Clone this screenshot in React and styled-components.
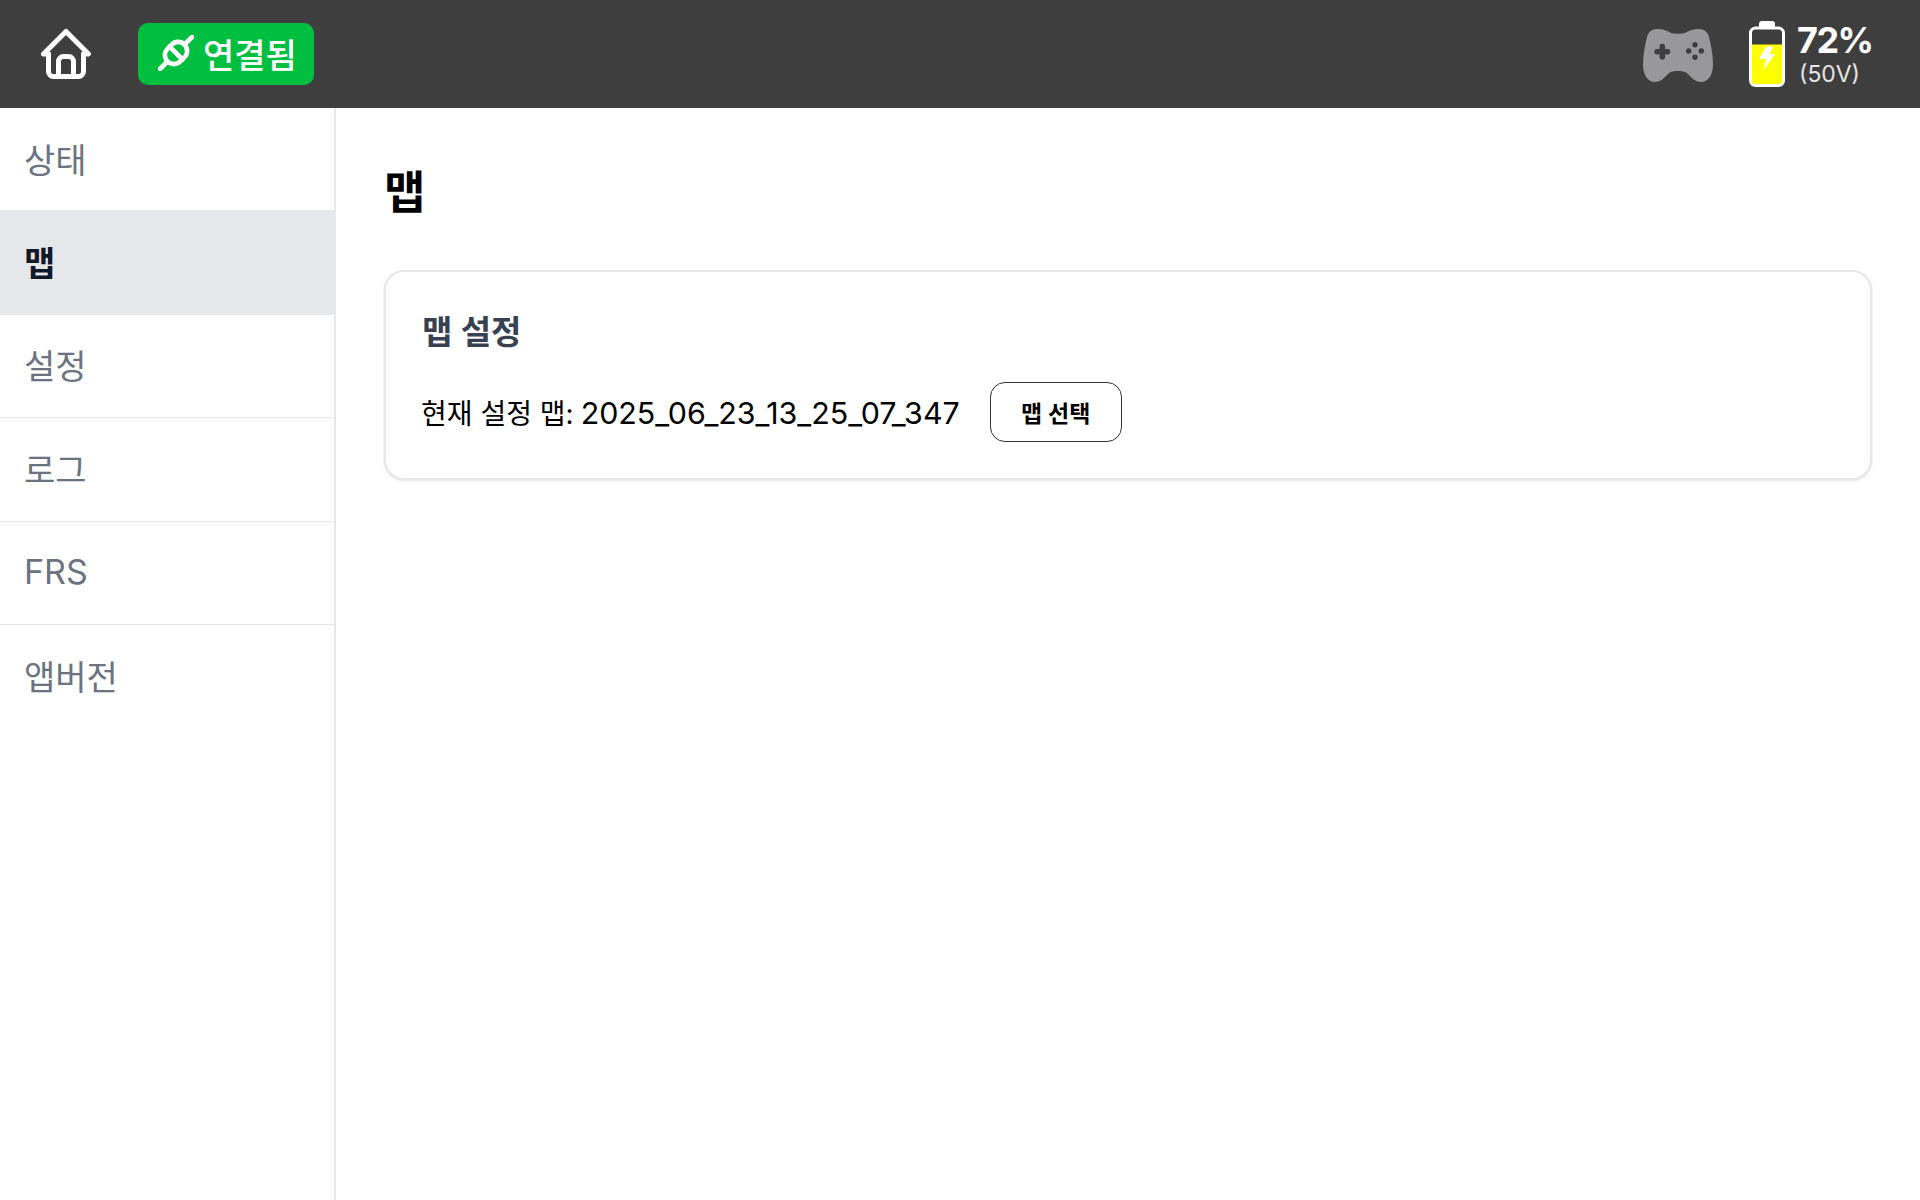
import React from "react";
import styled, { createGlobalStyle } from "styled-components";
import { TbHome } from "react-icons/tb";

const Global = createGlobalStyle`
  * { box-sizing: border-box; }
  html, body { margin: 0; padding: 0; background: #fff; }
  body { font-family: Inter, "Noto Sans CJK KR", sans-serif; }
`;
const Page = styled.div`display:flex;flex-direction:column;height:1200px;`;
const Header = styled.header`
  height:108px;background:#3e3e3e;display:flex;align-items:center;justify-content:space-between;
  padding:0 47px 0 36px;color:#fff;flex:none;
`;
const Group = styled.div`display:flex;align-items:center;`;
const HomeButton = styled.div`display:flex;color:#fff;font-size:60px;margin-right:42px;`;
const Status = styled.div`
  display:flex;align-items:center;gap:9px;height:62px;width:176px;padding:0 0 2px 20px;background:#00bf40;border-radius:10px;
  font-size:34px;font-weight:500;color:#fff;white-space:nowrap;
`;
const Plug = styled.svg`display:block;width:36px;height:36px;flex:none;`;
const Pad = styled.svg`display:block;width:70px;height:53px;margin:2px 36px 0 0;`;
const Battery = styled.svg`width:36px;height:66px;margin-right:12px;display:block;`;
const BatteryText = styled.div`display:flex;flex-direction:column;padding-top:2px;width:76px;`;
const Percent = styled.div`font-size:36px;font-weight:700;line-height:36px;letter-spacing:-1.5px;`;
const Volt = styled.div`font-size:23px;line-height:28px;margin-top:2px;color:#e5e5e5;padding-left:2px;`;
const Body = styled.div`display:flex;flex:1;min-height:0;`;
const Side = styled.nav`width:336px;flex:none;border-right:2px solid #e5e7eb;`;
const Item = styled.div`
  height:103.4px;display:flex;align-items:center;padding:0 24px 2px;font-size:34px;
  border-bottom:${p=>p.$last?"none":"1px solid #e5e7eb"};
  color:${p=>p.$active?"#111827":"#6b7280"};
  font-weight:${p=>p.$active?700:400};
  background:${p=>p.$active?"#e5e7eb":"transparent"};
`;
const Main = styled.main`flex:1;padding:58px 48px 48px;`;
const Title = styled.h1`margin:0 0 50px;font-size:45px;font-weight:700;line-height:54px;color:#000;`;
const Card = styled.section`
  border:2px solid #e5e7eb;border-radius:20px;padding:40px 36px 0;height:210px;
  box-shadow:0 1px 3px rgba(0,0,0,.1);background:#fff;
`;
const CardTitle = styled.h2`margin:0 0 30px;font-size:33px;font-weight:600;line-height:40px;color:#374151;`;
const Row = styled.div`display:flex;align-items:center;gap:30px;color:#000;`;
const Current = styled.div`display:flex;align-items:baseline;gap:7px;margin-left:-1px;`;
const Label = styled.span`font-size:28px;`;
const Value = styled.span`font-size:30.4px;`;
const Button = styled.button`
  width:132px;height:60px;border:1.5px solid #333;border-radius:15px;background:#fff;
  font-family:inherit;font-size:23px;font-weight:600;color:#000;padding:0;
`;
export default function App(){
  const items=["상태","맵","설정","로그","FRS","앱버전"];
  return <><Global/><Page>
    <Header>
      <Group>
        <HomeButton><TbHome/></HomeButton>
        <Status>
          <Plug viewBox="0 0 36 36" fill="none" stroke="#fff" strokeWidth="4.6" strokeLinecap="round">
            <path d="M2 34L8 28M28 8L34 2"/>
            <rect x="6" y="9" width="24" height="18" rx="9" transform="rotate(-45 18 18)"/>
            <path d="M11.5 11.5L24.5 24.5"/>
          </Plug>
          연결됨
        </Status>
      </Group>
      <Group>
        <Pad viewBox="0 0 70 53">
          <path fill="#98989a" d="M14 0C20 0 25 2 28 4C31 5 39 5 42 4C45 2 50 0 56 0C62 0 65 4 66 8C68 16 70 26 70 36C70 46 65 53 58 53C52 53 48 48 45 45C42 42 38 42 35 42C32 42 28 42 25 45C22 48 18 53 12 53C5 53 0 46 0 36C0 26 2 16 4 8C5 4 8 0 14 0Z"/>
          <path stroke="#3e3e3e" strokeWidth="5.5" strokeLinecap="round" fill="none" d="M14 22.7H24.6M19.3 17.4V28"/>
          <g fill="#3e3e3e">
            <circle cx="52" cy="15.7" r="2.7"/><circle cx="52" cy="28.3" r="2.7"/>
            <circle cx="45.7" cy="22" r="2.7"/><circle cx="58.3" cy="22" r="2.7"/>
          </g>
        </Pad>
        <Battery viewBox="0 0 36 66">
          <path d="M10 3a3 3 0 0 1 3-3h10a3 3 0 0 1 3 3v4H10z" fill="#fff"/>
          <rect x="2" y="23.5" width="32" height="41" fill="#ff0"/>
          <rect x="1.5" y="7" width="33" height="57.5" rx="5" fill="none" stroke="#fff" strokeWidth="3"/>
          <path d="M17 25.5H24L21 33H26L14.5 49L17 38H10Z" fill="#fff"/>
        </Battery>
        <BatteryText><Percent>72%</Percent><Volt>(50V)</Volt></BatteryText>
      </Group>
    </Header>
    <Body>
      <Side>{items.map((t,i)=><Item key={t} $active={t==="맵"} $last={i===items.length-1}>{t}</Item>)}</Side>
      <Main>
        <Title>맵</Title>
        <Card>
          <CardTitle>맵 설정</CardTitle>
          <Row><Current><Label>현재 설정 맵:</Label><Value>2025_06_23_13_25_07_347</Value></Current><Button>맵 선택</Button></Row>
        </Card>
      </Main>
    </Body>
  </Page></>;
}
